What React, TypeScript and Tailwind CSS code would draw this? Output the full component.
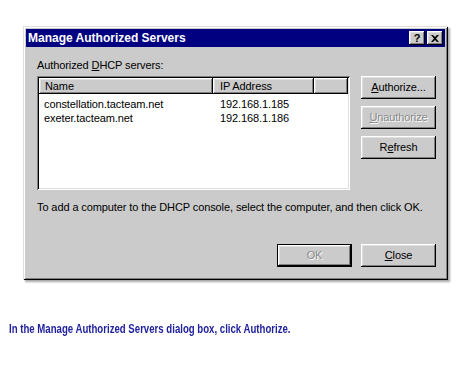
import React from 'react';

const raised =
  'shadow-[inset_-1px_-1px_#000,inset_1px_1px_#fff,inset_-2px_-2px_#808080,inset_2px_2px_#dfdfdf]';
const sunken =
  'shadow-[inset_1px_1px_#808080,inset_-1px_-1px_#fff,inset_2px_2px_#000,inset_-2px_-2px_#dfdfdf]';

function Btn({ children, disabled, dflt }: { children: React.ReactNode; disabled?: boolean; dflt?: boolean }) {
  return (
    <div className={`h-[23px] w-[75px] ${dflt ? 'border border-black' : ''}`}>
      <div
        className={`flex h-full w-full items-center justify-center bg-[#cbcbcb] ${raised} ${
          disabled ? 'text-[#8a8a8a] [text-shadow:1px_1px_0_#fff]' : 'text-black'
        }`}
      >
        {children}
      </div>
    </div>
  );
}

function TitleBtn({ children }: { children: React.ReactNode }) {
  return (
    <div className={`flex h-[14px] w-[16px] items-center justify-center bg-[#cbcbcb] ${raised} text-[11px] font-bold leading-none text-black`}>
      {children}
    </div>
  );
}

const rows = [
  { name: 'constellation.tacteam.net', ip: '192.168.1.185' },
  { name: 'exeter.tacteam.net', ip: '192.168.1.186' },
];

export default function App() {
  return (
    <div className="h-[375px] w-[470px] overflow-hidden bg-white pl-[23px] pt-[26px] font-['Liberation_Sans',Arial,sans-serif] text-[11px] leading-[13px] tracking-[-0.1px] text-black">
      <div className={`h-[254px] w-[425px] bg-[#cbcbcb] p-[3px] shadow-[inset_1px_1px_#dfdfdf,inset_-1px_-1px_#000,inset_2px_2px_#fff,inset_-2px_-2px_#808080,2px_2px_2px_rgba(0,0,0,0.35)]`}>
        {/* title bar */}
        <div className="flex h-[18px] items-center justify-between bg-[#000080] pl-[2px] pr-[2px]">
          <span className="text-[12px] font-bold tracking-normal text-white">Manage Authorized Servers</span>
          <div className="flex gap-[2px]">
            <TitleBtn>?</TitleBtn>
            <TitleBtn>
              <svg width="8" height="7" viewBox="0 0 8 7">
                <path d="M0 0h2l2 2 2-2h2L5 3.5 8 7H6L4 5 2 7H0l3-3.5z" fill="#000" />
              </svg>
            </TitleBtn>
          </div>
        </div>

        <div className="pl-[11px] pr-[9px]">
          <div className="mt-[12px]">
            Authorized <u>D</u>HCP servers:
          </div>
          <div className="mt-[4px] flex gap-[11px]">
            {/* list */}
            <div className={`h-[114px] w-[313px] bg-white p-[2px] ${sunken}`}>
              <div className="flex h-[16px]">
                <div className={`flex w-[174px] items-center bg-[#cbcbcb] pl-[6px] ${raised}`}>Name</div>
                <div className={`flex w-[101px] items-center bg-[#cbcbcb] pl-[7px] ${raised}`}>IP Address</div>
                <div className={`flex-1 bg-[#cbcbcb] ${raised}`} />
              </div>
              <div className="pt-[3px]">
                {rows.map((r) => (
                  <div key={r.name} className="flex h-[14px] items-center">
                    <span className="w-[174px] pl-[5px]">{r.name}</span>
                    <span className="pl-[7px]">{r.ip}</span>
                  </div>
                ))}
              </div>
            </div>
            {/* side buttons */}
            <div className="flex flex-col gap-[7px]">
              <Btn>
                <span>
                  <u>A</u>uthorize...
                </span>
              </Btn>
              <Btn disabled>
                <span>
                  <u>U</u>nauthorize
                </span>
              </Btn>
              <Btn>
                <span>
                  R<u>e</u>fresh
                </span>
              </Btn>
            </div>
          </div>
          <div className="mt-[11px]">
            To add a computer to the DHCP console, select the computer, and then click OK.
          </div>
          <div className="mt-[30px] flex justify-end gap-[9px]">
            <Btn disabled dflt>
              OK
            </Btn>
            <Btn>
              <span>
                <u>C</u>lose
              </span>
            </Btn>
          </div>
        </div>
      </div>

      <div className="mt-[41px] -ml-[14px] origin-left scale-x-[0.74] whitespace-nowrap font-['Liberation_Sans_Narrow','Liberation_Sans',sans-serif] text-[13px] font-bold leading-[16px] tracking-normal text-[#2222a0]">
        In the Manage Authorized Servers dialog box, click Authorize.
      </div>
    </div>
  );
}
